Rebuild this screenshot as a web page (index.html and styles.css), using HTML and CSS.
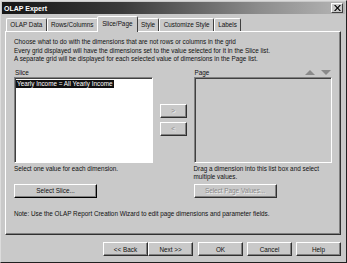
FILE: index.html
```html
<!DOCTYPE html>
<html lang="en">
<head>
    <meta charset="UTF-8">
    <title>OLAP Expert</title>
    <link rel="stylesheet" href="styles.css">
</head>
<body>
    <div class="dialog">
        <div class="titlebar">
            <span class="title">OLAP Expert</span>
            <span class="close-btn">
                <svg width="7" height="6" viewBox="0 0 7 6"><path d="M0 0h1.5l2 2.2 2-2.2H7L4.3 3 7 6H5.5l-2-2.2-2 2.2H0l2.7-3z" fill="#000"/></svg>
            </span>
        </div>

        <div class="tabs">
            <div class="tab">OLAP Data</div>
            <div class="tab">Rows/Columns</div>
            <div class="tab active">Slice/Page</div>
            <div class="tab">Style</div>
            <div class="tab">Customize Style</div>
            <div class="tab">Labels</div>
        </div>

        <div class="panel">
            <p class="intro">Choose what to do with the dimensions that are not rows or columns in the grid</p>
            <p class="intro">Every grid displayed will have the dimensions set to the value selected for it in the Slice list.</p>
            <p class="intro">A separate grid will be displayed for each selected value of dimensions in the Page list.</p>

            <div class="lists">
                <div class="col">
                    <div class="col-head">Slice</div>
                    <div class="listbox">
                        <div class="item selected">Yearly Income = All Yearly Income</div>
                    </div>
                    <div class="hint">Select one value for each dimension.</div>
                    <button class="btn btn-wide default">Select Slice...</button>
                </div>

                <div class="movers">
                    <button class="btn btn-small disabled">&gt;</button>
                    <button class="btn btn-small disabled">&lt;</button>
                </div>

                <div class="col">
                    <div class="col-head">
                        <span>Page</span>
                        <span class="arrows">
                            <svg width="10" height="5" viewBox="0 0 10 5"><path d="M5 0l5 5H0z" fill="#8a8a8a"/></svg>
                            <svg width="10" height="5" viewBox="0 0 10 5"><path d="M0 0h10L5 5z" fill="#8a8a8a"/></svg>
                        </span>
                    </div>
                    <div class="listbox empty"></div>
                    <div class="hint">Drag a dimension into this list box and select<br>multiple values.</div>
                    <button class="btn btn-wide disabled">Select Page Values...</button>
                </div>
            </div>

            <p class="note">Note: Use the OLAP Report Creation Wizard to edit page dimensions and parameter fields.</p>
        </div>

        <div class="footer">
            <div class="pair">
                <button class="btn">&lt;&lt; Back</button>
                <button class="btn">Next &gt;&gt;</button>
            </div>
            <button class="btn">OK</button>
            <button class="btn">Cancel</button>
            <button class="btn">Help</button>
        </div>
    </div>
</body>
</html>
```

FILE: styles.css
```css
body {
    margin: 0;
    background-color: #c9c9c9;
}
.dialog {
    width: 347px;
    height: 263px;
    box-sizing: border-box;
    background-color: #c9c9c9;
    border: 1px solid;
    border-color: #dcdcdc #202020 #202020 #dcdcdc;
    padding: 1px;
    font-family: 'Liberation Sans', Arial, sans-serif;
    font-size: 6.35px;
    color: #111;
}
.titlebar {
    height: 12px;
    display: flex;
    align-items: center;
    justify-content: space-between;
    padding: 0 2px 0 2px;
    background: linear-gradient(to right, #161616, #3a3a3a 35%, #8c8c8c 75%, #b5b5b5);
}
.title {
    color: #fff;
    font-weight: bold;
    font-size: 7px;
}
.close-btn {
    width: 10px;
    height: 8px;
    display: flex;
    align-items: center;
    justify-content: center;
    background-color: #c9c9c9;
    border: 1px solid;
    border-color: #fff #404040 #404040 #fff;
}
.tabs {
    display: flex;
    align-items: flex-end;
    height: 17px;
    padding-left: 4px;
}
.tab {
    height: 12px;
    line-height: 12px;
    padding: 0 3.3px;
    border: 1px solid;
    border-bottom: none;
    border-color: #fff #404040 transparent #fff;
    border-radius: 2px 2px 0 0;
    white-space: nowrap;
}
.tab.active {
    height: 15px;
    line-height: 14px;
    margin: 0 -1px -1px -1px;
    padding: 0 4.3px;
    background-color: #c9c9c9;
    position: relative;
    z-index: 1;
}
.panel {
    height: 204px;
    box-sizing: border-box;
    margin: 0 4px 0 3px;
    border: 1px solid;
    border-color: #fff #303030 #303030 #fff;
    box-shadow: inset -1px -1px #808080;
    padding: 6px 8px 0 8px;
}
.intro {
    margin: 0;
    line-height: 8.5px;
    white-space: nowrap;
}
.lists {
    display: flex;
    gap: 7px;
    margin-top: 4px;
}
.col {
    width: 139px;
    display: flex;
    flex-direction: column;
}
.col-head {
    height: 9px;
    line-height: 9px;
    padding-left: 1px;
    display: flex;
    justify-content: space-between;
    align-items: center;
}
.arrows {
    display: flex;
    gap: 6px;
    padding-right: 1px;
}
.listbox {
    height: 86px;
    box-sizing: border-box;
    background-color: #fff;
    border: 1px solid;
    border-color: #808080 #fff #fff #808080;
    box-shadow: inset 1px 1px #404040;
    padding: 2px 1px;
}
.listbox.empty {
    background-color: #c9c9c9;
}
.item {
    height: 8px;
    line-height: 8px;
    padding: 0 1px;
    white-space: nowrap;
}
.item.selected {
    display: inline-block;
    background-color: #111;
    color: #fff;
}
.hint {
    line-height: 8px;
    margin-top: 2px;
    min-height: 16px;
}
.btn {
    font-family: inherit;
    font-size: inherit;
    color: #111;
    background-color: #c9c9c9;
    height: 14px;
    width: 45px;
    padding: 0;
    box-sizing: border-box;
    border: 1px solid;
    border-color: #fff #303030 #303030 #fff;
    box-shadow: inset -1px -1px #808080;
}
.btn-wide {
    width: 83px;
    margin-top: 3px;
}
.btn.default {
    border-color: #fff #000 #000 #fff;
}
.btn.disabled {
    color: #8a8a8a;
    text-shadow: 1px 1px #f0f0f0;
}
.movers {
    width: 27px;
    display: flex;
    flex-direction: column;
    gap: 4px;
    padding-top: 36px;
}
.btn-small {
    width: 27px;
}
.note {
    margin: 12px 0 0 0;
    white-space: nowrap;
}
.footer {
    display: flex;
    justify-content: flex-end;
    gap: 4px;
    padding: 7px 4px 0 0;
}
.pair {
    display: flex;
    margin-right: 1px;
}
```
